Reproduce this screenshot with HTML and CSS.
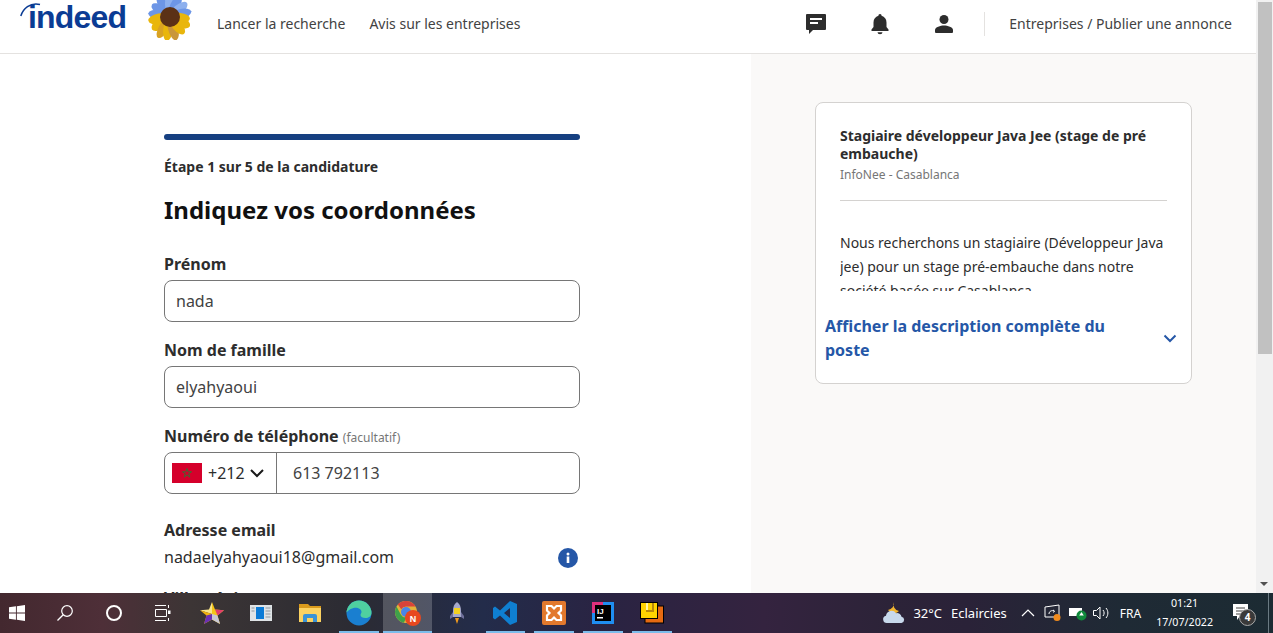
FILE: index.html
```html
<!DOCTYPE html>
<html lang="fr">
<head>
<meta charset="utf-8">
<title>Indeed</title>
<link rel="stylesheet" href="styles.css">
</head>
<body>
<div class="viewport">
  <div class="page">
    <header class="topbar">
      <div class="brand">
        <span class="logo"><svg class="logo-arc" width="22" height="16" viewBox="0 0 22 16"><path d="M.8 15C3 8 10 1 20 3.500" fill="none" stroke="#0b3c94" stroke-width="1.500"/></svg>indeed</span>
        <svg class="flower" width="46" height="40" viewBox="0 0 46 40">
          <g fill="#6d96e6">
            <ellipse cx="23" cy="6" rx="5" ry="11" transform="rotate(-80 23 17)"/>
            <ellipse cx="23" cy="6" rx="5" ry="11" transform="rotate(-55 23 17)"/>
            <ellipse cx="23" cy="5" rx="5" ry="12" transform="rotate(-30 23 17)"/>
            <ellipse cx="23" cy="4" rx="5" ry="12" fill="#8db0ee"/>
            <ellipse cx="23" cy="5" rx="5" ry="12" transform="rotate(25 23 17)"/>
            <ellipse cx="23" cy="6" rx="5" ry="11" transform="rotate(50 23 17)" fill="#8db0ee"/>
            <ellipse cx="23" cy="6" rx="5" ry="11" transform="rotate(75 23 17)"/>
          </g>
          <g fill="#e9b60c">
            <ellipse cx="23" cy="6" rx="5.500" ry="11" transform="rotate(-100 23 17)"/>
            <ellipse cx="23" cy="6" rx="5.500" ry="11" transform="rotate(-125 23 17)"/>
            <ellipse cx="23" cy="5" rx="5" ry="12" transform="rotate(-150 23 17)" fill="#d9a223"/>
            <ellipse cx="23" cy="5" rx="5" ry="12" transform="rotate(-172 23 17)"/>
            <ellipse cx="23" cy="5" rx="5" ry="12" transform="rotate(165 23 17)" fill="#c9963c"/>
            <ellipse cx="23" cy="6" rx="5" ry="11" transform="rotate(140 23 17)"/>
            <ellipse cx="23" cy="6" rx="5.500" ry="11" transform="rotate(115 23 17)"/>
            <ellipse cx="23" cy="7" rx="5" ry="10" transform="rotate(95 23 17)"/>
          </g>
          <circle cx="23" cy="17" r="10" fill="#5b3116"/>
        </svg>
      </div>
      <nav class="nav-main">
        <a class="nav-link">Lancer la recherche</a>
        <a class="nav-link">Avis sur les entreprises</a>
      </nav>
      <div class="nav-right">
        <svg class="nav-icon" width="24" height="24" viewBox="0 0 24 24"><path fill="#2d2d2d" d="M3 2h18a1 1 0 0 1 1 1v14a1 1 0 0 1-1 1H9l-4 4v-4H3a1 1 0 0 1-1-1V3a1 1 0 0 1 1-1z"/><path fill="#fff" d="M6 6h12v2H6zM6 10h8v2H6z"/></svg>
        <svg class="nav-icon" width="24" height="24" viewBox="0 0 24 24"><path fill="#2d2d2d" d="M12 2a1.600 1.600 0 0 1 1.600 1.700C16.600 4.500 18.500 7 18.500 10.500V15l2 2.500V19h-17v-1.500l2-2.500v-4.500C5.500 7 7.400 4.500 10.400 3.700A1.600 1.600 0 0 1 12 2z"/><path fill="#2d2d2d" d="M9.500 20.200h5a2.500 2 0 0 1-5 0z"/></svg>
        <svg class="nav-icon" width="24" height="24" viewBox="0 0 24 24"><circle cx="12" cy="7.500" r="4.500" fill="#2d2d2d"/><path fill="#2d2d2d" d="M3 20v-2c0-3 5.500-4.500 9-4.500s9 1.500 9 4.500v2a1 1 0 0 1-1 1H4a1 1 0 0 1-1-1z"/></svg>
        <span class="divider"></span>
        <a class="nav-link">Entreprises / Publier une annonce</a>
      </div>
    </header>
    <main class="content">
      <section class="form-col">
        <div class="progress"></div>
        <p class="step">Étape 1 sur 5 de la candidature</p>
        <h1 class="title">Indiquez vos coordonnées</h1>
        <div class="field">
          <label class="label">Prénom</label>
          <div class="input">nada</div>
        </div>
        <div class="field">
          <label class="label">Nom de famille</label>
          <div class="input">elyahyaoui</div>
        </div>
        <div class="field">
          <label class="label">Numéro de téléphone <span class="optional">(facultatif)</span></label>
          <div class="input phone">
            <div class="country">
              <svg class="flag" width="30" height="20" viewBox="0 0 30 20"><rect width="30" height="20" fill="#d5002b"/><path d="M15 5.500l1.100 3.300h3.400l-2.800 2 1.100 3.300-2.800-2-2.800 2 1.100-3.300-2.800-2h3.400z" fill="none" stroke="#3f6b32" stroke-width="1"/></svg>
              <span>+212</span>
              <svg class="country-chev" width="16" height="16" viewBox="0 0 16 16"><path d="M2 5l6 6 6-6" fill="none" stroke="#1a1a1a" stroke-width="2"/></svg>
            </div>
            <div class="phone-num">613 792113</div>
          </div>
        </div>
        <div class="email-block">
          <p class="label">Adresse email</p>
          <div class="email-row">
            <span>nadaelyahyaoui18@gmail.com</span>
            <svg class="info" width="20" height="20" viewBox="0 0 20 20"><circle cx="10" cy="10" r="10" fill="#2557a7"/><rect x="8.700" y="8.500" width="2.600" height="6.500" fill="#fff"/><circle cx="10" cy="6" r="1.500" fill="#fff"/></svg>
          </div>
        </div>
        <p class="label city">Ville, région</p>
      </section>
      <aside class="side-col">
        <div class="card">
          <div class="card-head">
            <h2 class="job-title">Stagiaire développeur Java Jee (stage de pré embauche)</h2>
            <p class="job-meta">InfoNee - Casablanca</p>
          </div>
          <div class="card-desc">Nous recherchons un stagiaire (Développeur Java jee) pour un stage pré-embauche dans notre société basée sur Casablanca</div>
          <div class="card-more">
            <span>Afficher la description complète du poste</span>
            <svg width="16" height="16" viewBox="0 0 16 16"><path d="M2.500 5.500l5.500 5.500 5.500-5.500" fill="none" stroke="#2557a7" stroke-width="2"/></svg>
          </div>
        </div>
      </aside>
    </main>
    <div class="scrollbar">
      <div class="thumb"></div>
      <span class="arrow-down"></span>
    </div>
  </div>
  <footer class="taskbar">
    <div class="task-left">
      <span class="tb tb-start"><svg width="16" height="16" viewBox="0 0 18 18"><path fill="#fff" d="M0 2.600l7.800-1.100v7H0zM8.800 1.300L18 0v8.500H8.800zM0 9.500h7.800v7L0 15.400zM8.800 9.500H18V18l-9.200-1.300z"/></svg></span>
      <span class="tb"><svg width="16" height="16" viewBox="0 0 16 16"><circle cx="10" cy="6" r="5.300" fill="none" stroke="#fff" stroke-width="1.200"/><path d="M6.200 9.800L.5 15.500" stroke="#fff" stroke-width="1.300"/></svg></span>
      <span class="tb"><svg width="16" height="16" viewBox="0 0 16 16"><circle cx="8" cy="8" r="7" fill="none" stroke="#fff" stroke-width="2"/></svg></span>
      <span class="tb"><svg width="16" height="16" viewBox="0 0 16 16"><path d="M0 .5h11M0 15.500h11M.5 4.500h11v7H.5zM13.500 0v3M13.500 13v3" fill="none" stroke="#fff" stroke-width="1"/><rect x="13" y="5.500" width="2.500" height="3.500" fill="#fff"/></svg></span>
      <span class="tb"><svg width="24" height="22" viewBox="0 0 24 22"><path fill="#f5c518" d="M12 0l3 7.500 9 .8-6.500 5.200 2.500 8.500-8-4.500z"/><path fill="#e23d6d" d="M15 7.500l9 .8-6.500 5.200z"/><path fill="#fbe68a" d="M12 0v12L0 8.300l9-.8z"/><path fill="#f2b20c" d="M12 12v5.500l-8 4.500 2.500-8.500L0 8.300z"/><path fill="#6a2fb5" d="M12 12v5.500l-8 4.500 2.500-8.500z"/><path fill="#c9c9d6" d="M12 12l5.500 1.500 2.500 8.500-8-4.500z"/></svg></span>
      <span class="tb"><svg width="22" height="16" viewBox="0 0 22 16"><rect width="22" height="16" fill="#dfe3e6"/><rect x="6" y="2" width="8" height="12" fill="#0a7ad6"/><path d="M15.500 3h5M15.500 6h5M15.500 9h5M15.500 12h5M1.500 3h3M1.500 6h3" stroke="#8f98a0"/></svg></span>
      <span class="tb"><svg width="22" height="18" viewBox="0 0 22 18"><path fill="#d99a1c" d="M0 0h9l2 2h11v4H0z"/><rect y="4" width="22" height="14" fill="#fbd261"/><path fill="#3a93d6" d="M4 18v-6a2 2 0 0 1 2-2h10a2 2 0 0 1 2 2v6h-4v-4H8v4z"/></svg></span>
      <span class="tb running"><svg width="26" height="26" viewBox="0 0 26 26"><circle cx="13" cy="13" r="12.500" fill="#1a7fd0"/><path d="M13 .5A12.500 12.500 0 0 1 25.500 13c0 3-3 5-6 5-3 0-5-1-5-3 0-1 1-2 1-3 0-3-4-5-8-4-4 1-7 4-7 5A12.500 12.500 0 0 1 13 .5z" fill="#4fd0a0"/></svg></span>
      <span class="tb running active"><svg width="26" height="25" viewBox="0 0 26 25"><circle cx="11" cy="11" r="11" fill="#e2b33a"/><path d="M11 0a11 11 0 0 1 9.500 5.500H11a5.500 5.500 0 0 0-4.800 2.800L2.700 3.200A11 11 0 0 1 11 0z" fill="#d8433a"/><path d="M1.500 5.500l4.400 8.200a5.500 5.500 0 0 0 5.500 2.800L8.800 21.800A11 11 0 0 1 1.500 5.500z" fill="#3fa14a"/><circle cx="11" cy="11" r="5" fill="#4a86e8"/><circle cx="18" cy="17" r="8" fill="#e8481f"/><text x="18" y="20.500" class="badge-n" text-anchor="middle">N</text></svg></span>
      <span class="tb"><svg width="16" height="22" viewBox="0 0 16 22"><path d="M8 0c3 2 4 5 4 9v6H4V9c0-4 1-7 4-9z" fill="#a7a9c9"/><rect x="5" y="6" width="6" height="6" fill="#f4d21f"/><path d="M4 10l-3 4v3l3-2zM12 10l3 4v3l-3-2z" fill="#6d6f99"/><path d="M6 16h4l-2 6z" fill="#f19a1d"/></svg></span>
      <span class="tb running"><svg width="24" height="24" viewBox="0 0 24 24"><path fill="#0f7fd1" d="M17 0l7 3v18l-7 3-10-9.500-5 4L0 17V7l2-1.500 5 4zM17 7l-6 5 6 5z"/></svg></span>
      <span class="tb running"><svg width="24" height="24" viewBox="0 0 24 24"><rect width="24" height="24" rx="2" fill="#e2792d"/><path d="M5 5h4.500L12 7.500 14.500 5H19v4.500L16.500 12l2.500 2.500V19h-4.500L12 16.500 9.500 19H5v-4.500L7.500 12 5 9.500z" fill="none" stroke="#fff" stroke-width="2.200"/></svg></span>
      <span class="tb running"><svg width="22" height="22" viewBox="0 0 22 22"><rect width="22" height="22" fill="#1f8ef1"/><rect width="11" height="11" fill="#e0307c"/><rect x="3" y="3" width="16" height="16" fill="#000"/><text x="5" y="12" class="ij">IJ</text><rect x="5" y="15" width="6" height="1.500" fill="#fff"/></svg></span>
      <span class="tb running"><svg width="24" height="22" viewBox="0 0 24 22"><rect x="5" y="4" width="18.500" height="17" fill="#e66a12" stroke="#000"/><rect x=".5" y=".5" width="17" height="16" fill="#ffd400" stroke="#000"/><rect x="6" y="1" width="2" height="7" fill="#fff6a5"/><rect x="12" y="1" width="2" height="7" fill="#b8890a"/><rect x="6" y="8" width="8" height="2" fill="#b8890a"/></svg></span>
    </div>
    <div class="task-right">
      <svg class="weather" width="24" height="22" viewBox="0 0 24 22"><path d="M12 0a6.500 6.500 0 0 0 5 9 7 7 0 0 1-11-1 7 7 0 0 0 6-8z" fill="#f2b632"/><path d="M5 21a3.700 3.700 0 0 1-1-7.300 5.500 5.500 0 0 1 10-2.500 4.500 4.500 0 0 1 5.500 3.500 3.200 3.200 0 0 1 0 6.300z" fill="#c8d9ec"/></svg>
      <span class="temp">32°C</span>
      <span class="cond">Eclaircies</span>
      <svg class="tray-chev" width="14" height="8" viewBox="0 0 14 8"><path d="M1 7l6-6 6 6" fill="none" stroke="#fff" stroke-width="1.200"/></svg>
      <svg class="tray t1" width="18" height="18" viewBox="0 0 18 18"><path d="M1 3l14-2v12H1z" fill="none" stroke="#fff"/><path d="M5 10c0-3 3-4 5-3M9 6l1.500 1-1 1.500" fill="none" stroke="#fff"/><circle cx="13" cy="13.500" r="3.500" fill="#f08a1d"/></svg>
      <svg class="tray t2" width="18" height="18" viewBox="0 0 18 18"><rect y="4" width="13" height="8" fill="#fff"/><circle cx="12.500" cy="11.500" r="5" fill="#0f8a3c"/><path d="M12.500 8l2.300 3.500h-4.600z" fill="#fff"/></svg>
      <svg class="tray t3" width="18" height="18" viewBox="0 0 18 18"><path d="M1.500 6.500h3l3.500-3.500v12l-3.500-3.500h-3z" fill="none" stroke="#fff"/><path d="M11 6c1.500 2 1.500 4 0 6M14 4c2.500 3 2.500 7 0 10" fill="none" stroke="#fff"/></svg>
      <span class="lang">FRA</span>
      <div class="clock"><span>01:21</span><span>17/07/2022</span></div>
      <div class="notif">
        <svg width="20" height="18" viewBox="0 0 20 18"><path d="M1 1h15v12H8l-3 4v-4H1z" fill="#fff"/><path d="M4 5h9M4 8h9M4 11h6" stroke="#444"/></svg>
        <span class="notif-badge">4</span>
      </div>
      <span class="show-desktop"></span>
    </div>
  </footer>
</div>
</body>
</html>
```
FILE: styles.css
```css
* { box-sizing: border-box; }
html, body { margin: 0; padding: 0; height: 100%; overflow: hidden; }
body { font-family: "Noto Sans", "Open Sans", sans-serif; color: #2d2d2d; background: #fff; }
p, h1, h2 { margin: 0; }

.viewport { width: 1273px; height: 633px; display: flex; flex-direction: column; overflow: hidden; }
.page { flex: 0 0 593px; height: 593px; display: grid; grid-template-columns: 1256px 17px; grid-template-rows: 54px 539px; overflow: hidden; }

.topbar { grid-column: 1; grid-row: 1; display: flex; align-items: center; border-bottom: 1px solid #e4e2e0; padding: 0 24px 5px 20px; background: #fff; }
.brand { display: flex; align-items: flex-start; gap: 20px; height: 48px; }
.logo { position: relative; font-family: "Liberation Sans", sans-serif; font-weight: 700; font-size: 32px; line-height: 32px; letter-spacing: -.800px; color: #0b3c94; width: 107px; padding-left: 8px; margin-top: 1px; }
.logo-arc { position: absolute; left: 0; top: 0; }
.nav-main { display: flex; gap: 24px; margin-left: 24px; }
.nav-link { font-size: 14px; line-height: 20px; color: #424242; white-space: nowrap; }
.nav-right { display: flex; align-items: center; margin-left: auto; }
.nav-icon { margin-right: 40px; }
.nav-icon:nth-child(3) { margin-right: 28px; }
.divider { width: 1px; height: 24px; background: #e4e2e0; margin-right: 24px; }

.content { grid-column: 1; grid-row: 2; display: grid; grid-template-columns: 751px 505px; overflow: hidden; }
.form-col { padding: 80px 171px 0 164px; background: #fff; }
.progress { height: 6px; border-radius: 3px; background: #164081; }
.step { font-size: 14px; font-weight: 700; line-height: 18px; margin-top: 18px; color: #2d2d2d; }
.title { font-size: 24px; font-weight: 700; line-height: 32px; margin-top: 18px; color: #111; }
.field { margin-top: 26px; }
.field + .field { margin-top: 16px; }
.label { display: block; height: 24px; font-size: 16px; font-weight: 700; line-height: 24px; color: #2d2d2d; }
.optional { font-size: 12px; font-weight: 400; color: #767676; }
.input { height: 42px; margin-top: 4px; border: 1px solid #767676; border-radius: 8px; padding: 0 11px; display: flex; align-items: center; font-size: 16px; color: #424242; }
.phone { padding: 0; }
.country { display: flex; align-items: center; width: 112px; height: 100%; padding-left: 7px; gap: 6px; border-right: 1px solid #767676; color: #2d2d2d; }
.country-chev { margin-left: -2px; }
.phone-num { padding-left: 16px; }
.email-block { margin-top: 24px; }
.email-row { display: flex; justify-content: space-between; align-items: center; padding-right: 2px; font-size: 16px; line-height: 24px; margin-top: 3px; color: #2d2d2d; }
.info { margin-top: 2px; }
.city { margin-top: 17px; }

.side-col { background: #faf9f8; padding: 48px 64px 0; }
.card { width: 377px; height: 282px; background: #fff; border: 1px solid #d4d2d0; border-radius: 8px; padding: 24px 0 0; }
.card-head { margin: 0 24px; padding-bottom: 16px; border-bottom: 1px solid #d4d2d0; }
.job-title { font-size: 14px; font-weight: 700; line-height: 18px; color: #2d2d2d; }
.job-meta { font-size: 12px; line-height: 18px; margin-top: 3px; color: #767676; }
.card-desc { margin: 30px 24px 0; font-size: 14px; line-height: 24px; height: 60px; overflow: hidden; color: #2d2d2d; }
.card-more { display: flex; align-items: center; justify-content: space-between; margin-top: 23px; padding: 0 13px 0 9px; font-size: 16px; font-weight: 700; line-height: 24px; color: #2557a7; }
.card-more span { width: 310px; }

.scrollbar { grid-column: 2; grid-row: 1 / 3; background: #f1f1f1; position: relative; }
.thumb { width: 14px; height: 352px; margin: 2px 0 0 2px; background: #c1c1c1; }
.arrow-down { position: absolute; bottom: 7px; left: 4px; width: 0; height: 0; border: 4px solid transparent; border-bottom: 0; border-top: 4px solid #505050; }

.taskbar { flex: 0 0 40px; height: 40px; display: flex; justify-content: space-between; color: #fff; background: linear-gradient(90deg, #43282f 0%, #4e2f38 8%, #3c3535 15%, #2b2b33 28%, #232c4a 38%, #2a2342 48%, #34233f 60%, #2c2338 70%, #2a2238 76%, #1f2a35 88%, #1c2b33 100%); }
.task-left { display: flex; }
.tb { position: relative; width: 48.900px; height: 40px; display: flex; align-items: center; justify-content: center; }
.tb-start { width: 41px; padding-right: 7px; }
.running::after { content: ""; position: absolute; left: 4.500px; right: 4.500px; bottom: 0; height: 2px; background: #7cbcea; }
.active { background: rgba(255,255,255,.2); }
.active::after { left: 0; right: 0; }
.badge-n { font: 700 9px "Liberation Sans", sans-serif; fill: #fff; }
.ij { font: 700 8px "Liberation Sans", sans-serif; fill: #fff; }
.task-right { display: flex; align-items: center; font-size: 13px; }
.weather { margin-right: 7px; }
.temp { margin-right: 9px; }
.cond { margin-right: 14px; }
.tray-chev { margin-right: 9px; }
.t1 { margin-right: 7px; }
.t2 { margin-right: 5px; }
.t3 { margin-right: 10px; }
.lang { font-size: 12px; margin-right: 15px; }
.clock { display: flex; flex-direction: column; align-items: center; font-size: 10.700px; line-height: 19px; margin-right: 19px; }
.notif { position: relative; width: 32px; height: 30px; padding-top: 5px; }
.notif-badge { position: absolute; left: 7px; top: 11px; width: 17px; height: 17px; border-radius: 50%; background: #3a3a3a; border: 1px solid #aaa; font-size: 10px; font-weight: 700; line-height: 15px; text-align: center; }
.show-desktop { width: 1px; height: 40px; margin: 0 4px; background: #6b7a82; }
```
